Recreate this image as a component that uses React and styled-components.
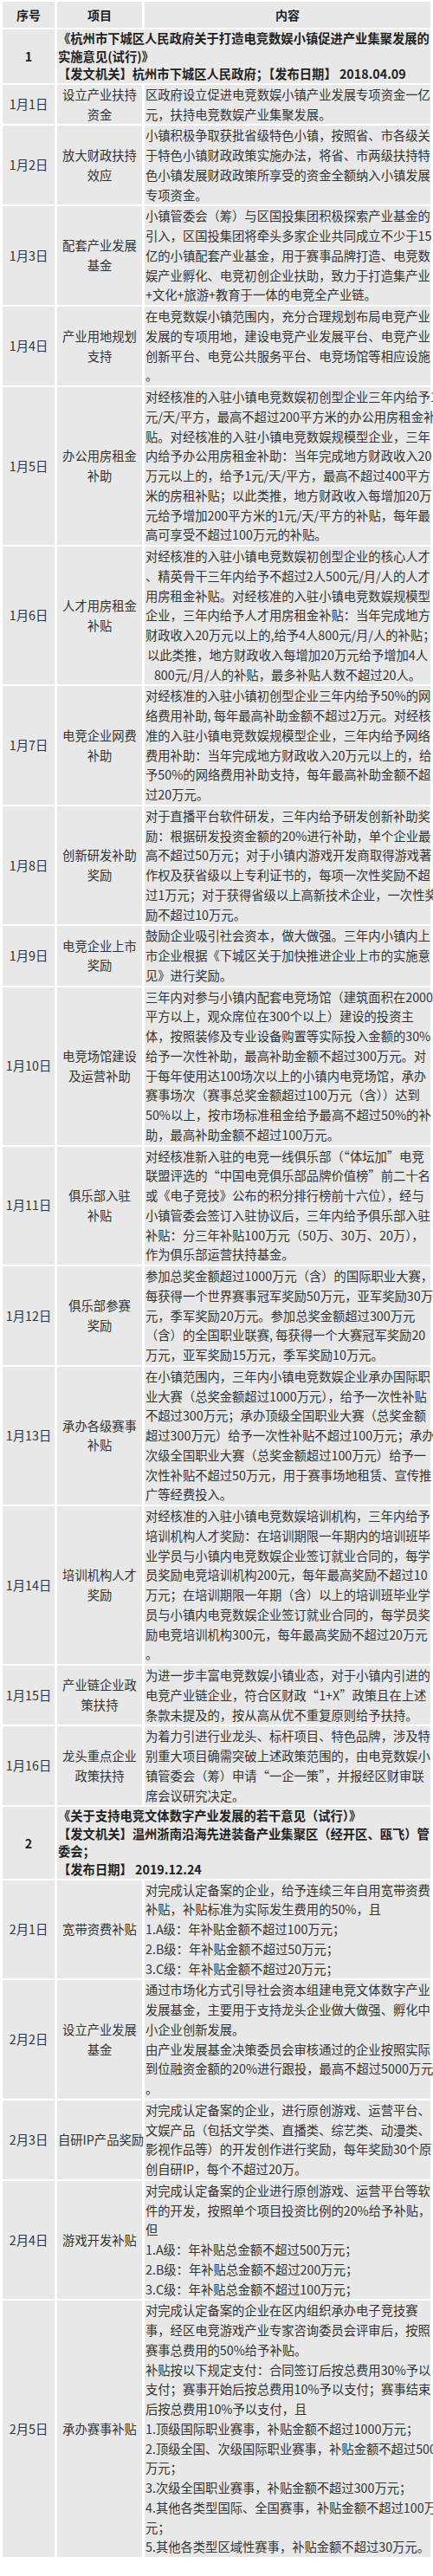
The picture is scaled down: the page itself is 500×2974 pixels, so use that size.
import React from "react"
import styled, { createGlobalStyle } from "styled-components"

const GlobalStyle = createGlobalStyle`
  html, body {
    margin: 0;
    padding: 0;
    background: #fff;
  }
  body {
    font-family: "Noto Sans CJK SC", "Noto Sans", sans-serif;
    color: #333;
  }
`

const sections = [
  {
    no: "1",
    title: [
      "《杭州市下城区人民政府关于打造电竞数娱小镇促进产业集聚发展的",
      "实施意见(试行)》",
      "【发文机关】杭州市下城区人民政府；【发布日期】 2018.04.09",
    ],
    items: [
      {
        date: "1月1日",
        name: ["设立产业扶持", "资金"],
        lines: ["区政府设立促进电竞数娱小镇产业发展专项资金一亿", "元，扶持电竞数娱产业集聚发展。"],
      },
      {
        date: "1月2日",
        name: ["放大财政扶持", "效应"],
        lines: [
          "小镇积极争取获批省级特色小镇，按照省、市各级关",
          "于特色小镇财政政策实施办法，将省、市两级扶持特",
          "色小镇发展财政政策所享受的资金全额纳入小镇发展",
          "专项资金。",
        ],
      },
      {
        date: "1月3日",
        name: ["配套产业发展", "基金"],
        lines: [
          "小镇管委会（筹）与区国投集团积极探索产业基金的",
          "引入，区国投集团将牵头多家企业共同成立不少于15",
          "亿的小镇配套产业基金，用于赛事品牌打造、电竞数",
          "娱产业孵化、电竞初创企业扶助，致力于打造集产业",
          "+文化+旅游+教育于一体的电竞全产业链。",
        ],
      },
      {
        date: "1月4日",
        name: ["产业用地规划", "支持"],
        lines: [
          "在电竞数娱小镇范围内，充分合理规划布局电竞产业",
          "发展的专项用地，建设电竞产业发展平台、电竞产业",
          "创新平台、电竞公共服务平台、电竞场馆等相应设施",
          "。",
        ],
      },
      {
        date: "1月5日",
        name: ["办公用房租金", "补助"],
        lines: [
          "对经核准的入驻小镇电竞数娱初创型企业三年内给予1",
          "元/天/平方，最高不超过200平方米的办公用房租金补",
          "贴。对经核准的入驻小镇电竞数娱规模型企业，三年",
          "内给予办公用房租金补助：当年完成地方财政收入20",
          "万元以上的，给予1元/天/平方，最高不超过400平方",
          "米的房租补贴；以此类推，地方财政收入每增加20万",
          "元给予增加200平方米的1元/天/平方的补贴，每年最",
          "高可享受不超过100万元的补贴。",
        ],
      },
      {
        date: "1月6日",
        name: ["人才用房租金", "补贴"],
        center: true,
        lines: [
          "对经核准的入驻小镇电竞数娱初创型企业的核心人才",
          "、精英骨干三年内给予不超过2人500元/月/人的人才",
          "用房租金补贴。对经核准的入驻小镇电竞数娱规模型",
          "企业，三年内给予人才用房租金补贴：当年完成地方",
          "财政收入20万元以上的,给予4人800元/月/人的补贴；",
          "以此类推，地方财政收入每增加20万元给予增加4人",
          "800元/月/人的补贴，最多补贴人数不超过20人。",
        ],
      },
      {
        date: "1月7日",
        name: ["电竞企业网费", "补助"],
        lines: [
          "对经核准的入驻小镇初创型企业三年内给予50%的网",
          "络费用补助, 每年最高补助金额不超过2万元。对经核",
          "准的入驻小镇电竞数娱规模型企业，三年内给予网络",
          "费用补助：当年完成地方财政收入20万元以上的，给",
          "予50%的网络费用补助支持，每年最高补助金额不超",
          "过20万元。",
        ],
      },
      {
        date: "1月8日",
        name: ["创新研发补助", "奖励"],
        lines: [
          "对于直播平台软件研发，三年内给予研发创新补助奖",
          "励：根据研发投资金额的20%进行补助，单个企业最",
          "高不超过50万元；对于小镇内游戏开发商取得游戏著",
          "作权及获省级以上专利证书的，每项一次性奖励不超",
          "过1万元；对于获得省级以上高新技术企业，一次性奖",
          "励不超过10万元。",
        ],
      },
      {
        date: "1月9日",
        name: ["电竞企业上市", "奖励"],
        lines: [
          "鼓励企业吸引社会资本，做大做强。三年内小镇内上",
          "市企业根据《下城区关于加快推进企业上市的实施意",
          "见》进行奖励。",
        ],
      },
      {
        date: "1月10日",
        name: ["电竞场馆建设", "及运营补助"],
        lines: [
          "三年内对参与小镇内配套电竞场馆（建筑面积在2000",
          "平方以上，观众席位在300个以上）建设的投资主",
          "体，按照装修及专业设备购置等实际投入金额的30%",
          "给予一次性补助，最高补助金额不超过300万元。对",
          "于每年使用达100场次以上的小镇内电竞场馆，承办",
          "赛事场次（赛事总奖金额超过100万元（含））达到",
          "50%以上，按市场标准租金给予最高不超过50%的补",
          "助，最高补助金额不超过100万元。",
        ],
      },
      {
        date: "1月11日",
        name: ["俱乐部入驻", "补贴"],
        lines: [
          "对经核准新入驻的电竞一线俱乐部（“体坛加”电竞",
          "联盟评选的“中国电竞俱乐部品牌价值榜”前二十名",
          "或《电子竞技》公布的积分排行榜前十六位），经与",
          "小镇管委会签订入驻协议后，三年内给予俱乐部入驻",
          "补贴：分三年补贴100万元（50万、30万、20万），",
          "作为俱乐部运营扶持基金。",
        ],
      },
      {
        date: "1月12日",
        name: ["俱乐部参赛", "奖励"],
        lines: [
          "参加总奖金额超过1000万元（含）的国际职业大赛，",
          "每获得一个世界赛事冠军奖励50万元，亚军奖励30万",
          "元，季军奖励20万元。参加总奖金额超过300万元",
          "（含）的全国职业联赛, 每获得一个大赛冠军奖励20",
          "万元，亚军奖励15万元，季军奖励10万元。",
        ],
      },
      {
        date: "1月13日",
        name: ["承办各级赛事", "补贴"],
        lines: [
          "在小镇范围内，三年内小镇电竞数娱企业承办国际职",
          "业大赛（总奖金额超过1000万元），给予一次性补贴",
          "不超过300万元；承办顶级全国职业大赛（总奖金额",
          "超过300万元）给予一次性补贴不超过100万元；承办",
          "次级全国职业大赛（总奖金额超过100万元）给予一",
          "次性补贴不超过50万元，用于赛事场地租赁、宣传推",
          "广等经费投入。",
        ],
      },
      {
        date: "1月14日",
        name: ["培训机构人才", "奖励"],
        lines: [
          "对经核准的入驻小镇电竞数娱培训机构，三年内给予",
          "培训机构人才奖励：在培训期限一年期内的培训班毕",
          "业学员与小镇内电竞数娱企业签订就业合同的，每学",
          "员奖励电竞培训机构200元，每年最高奖励不超过10",
          "万元；在培训期限一年期（含）以上的培训班毕业学",
          "员与小镇内电竞数娱企业签订就业合同的，每学员奖",
          "励电竞培训机构300元，每年最高奖励不超过20万元",
          "。",
        ],
      },
      {
        date: "1月15日",
        name: ["产业链企业政", "策扶持"],
        lines: [
          "为进一步丰富电竞数娱小镇业态，对于小镇内引进的",
          "电竞产业链企业，符合区财政“1+X”政策且在上述",
          "条款未提及的，按从高从优不重复原则给予扶持。",
        ],
      },
      {
        date: "1月16日",
        name: ["龙头重点企业", "政策扶持"],
        lines: [
          "为着力引进行业龙头、标杆项目、特色品牌，涉及特",
          "别重大项目确需突破上述政策范围的，由电竞数娱小",
          "镇管委会（筹）申请“一企一策”，并报经区财审联",
          "席会议研究决定。",
        ],
      },
    ],
  },
  {
    no: "2",
    title: [
      "《关于支持电竞文体数字产业发展的若干意见（试行）》",
      "【发文机关】温州浙南沿海先进装备产业集聚区（经开区、瓯飞）管",
      "委会；",
      "【发布日期】 2019.12.24",
    ],
    items: [
      {
        date: "2月1日",
        name: ["宽带资费补贴"],
        lines: [
          "对完成认定备案的企业，给予连续三年自用宽带资费",
          "补贴，补贴标准为实际发生费用的50%，且",
          "1.A级：年补贴金额不超过100万元；",
          "2.B级：年补贴金额不超过50万元；",
          "3.C级：年补贴金额不超过20万元；",
        ],
      },
      {
        date: "2月2日",
        name: ["设立产业发展", "基金"],
        lines: [
          "通过市场化方式引导社会资本组建电竞文体数字产业",
          "发展基金，主要用于支持龙头企业做大做强、孵化中",
          "小企业创新发展。",
          "由产业发展基金决策委员会审核通过的企业按照实际",
          "到位融资金额的20%进行跟投，最高不超过5000万元",
          "。",
        ],
      },
      {
        date: "2月3日",
        name: ["自研IP产品奖励"],
        lines: [
          "对完成认定备案的企业，进行原创游戏、运营平台、",
          "文娱产品（包括文学类、直播类、综艺类、动漫类、",
          "影视作品等）的开发创作进行奖励，每年奖励30个原",
          "创自研IP，每个不超过20万。",
        ],
      },
      {
        date: "2月4日",
        name: ["游戏开发补贴"],
        lines: [
          "对完成认定备案的企业进行原创游戏、运营平台等软",
          "件的开发，按照单个项目投资比例的20%给予补贴，",
          "但",
          "1.A级：年补贴总金额不超过500万元；",
          "2.B级：年补贴总金额不超过200万元；",
          "3.C级：年补贴总金额不超过100万元；",
        ],
      },
      {
        date: "2月5日",
        name: ["承办赛事补贴"],
        lines: [
          "对完成认定备案的企业在区内组织承办电子竞技赛",
          "事，经区电竞游戏产业专家咨询委员会评审后，按照",
          "赛事总费用的50%给予补贴。",
          "补贴按以下规定支付：合同签订后按总费用30%予以",
          "支付；赛事开始后按总费用10%予以支付；赛事结束",
          "后按总费用10%予以支付，且",
          "1.顶级国际职业赛事，补贴金额不超过1000万元；",
          "2.顶级全国、次级国际职业赛事，补贴金额不超过500",
          "万元；",
          "3.次级全国职业赛事，补贴金额不超过300万元；",
          "4.其他各类型国际、全国赛事，补贴金额不超过100万",
          "元；",
          "5.其他各类型区域性赛事，补贴金额不超过30万元。",
        ],
      },
    ],
  },
]

export default function App() {
  return (
    <>
      <GlobalStyle />
      <Table>
        <colgroup>
          <col style={{ width: 60 }} />
          <col style={{ width: 98 }} />
          <col />
        </colgroup>
        <thead>
          <tr>
            <HeadCell>序号</HeadCell>
            <HeadCell>项目</HeadCell>
            <HeadCell>内容</HeadCell>
          </tr>
        </thead>
        <tbody>
          {sections.map(section => (
            <React.Fragment key={section.no}>
              <tr>
                <SectionNo>{section.no}</SectionNo>
                <SectionTitle colSpan={2}>
                  {section.title.map((l, i) => (
                    <Line key={i}>{l}</Line>
                  ))}
                </SectionTitle>
              </tr>
              {section.items.map(item => (
                <tr key={item.date}>
                  <DateCell>{item.date}</DateCell>
                  <NameCell>
                    {item.name.map((l, i) => (
                      <Line key={i}>{l}</Line>
                    ))}
                  </NameCell>
                  <ContentCell $center={item.center}>
                    {item.lines.map((l, i) => (
                      <Line key={i}>{l}</Line>
                    ))}
                  </ContentCell>
                </tr>
              ))}
            </React.Fragment>
          ))}
        </tbody>
      </Table>
    </>
  )
}

const Table = styled.table`
  width: 500px;
  table-layout: fixed;
  border-collapse: separate;
  border-spacing: 3px 2px;
  font-size: 14.3px;
  td,
  th {
    background: #e8e8e8;
    padding: 0 1px;
  }
`

const Line = styled.span`
  display: block;
  white-space: nowrap;
`

const HeadCell = styled.th`
  height: 30px;
  font-size: 14px;
  font-weight: bold;
  color: #222;
  text-align: center;
  vertical-align: middle;
`

const SectionNo = styled.td`
  text-align: center;
  vertical-align: middle;
  font-weight: bold;
  color: #222;
`

const SectionTitle = styled.td`
  line-height: 20.6px;
  font-weight: bold;
  color: #222;
  text-align: left;
`

const DateCell = styled.td`
  text-align: center;
  vertical-align: middle;
  line-height: 22.75px;
`

const NameCell = styled.td`
  text-align: center;
  vertical-align: middle;
  line-height: 22.75px;
`

const ContentCell = styled.td`
  vertical-align: top;
  line-height: 22.75px;
  text-align: ${p => (p.$center ? "center" : "left")};
`
